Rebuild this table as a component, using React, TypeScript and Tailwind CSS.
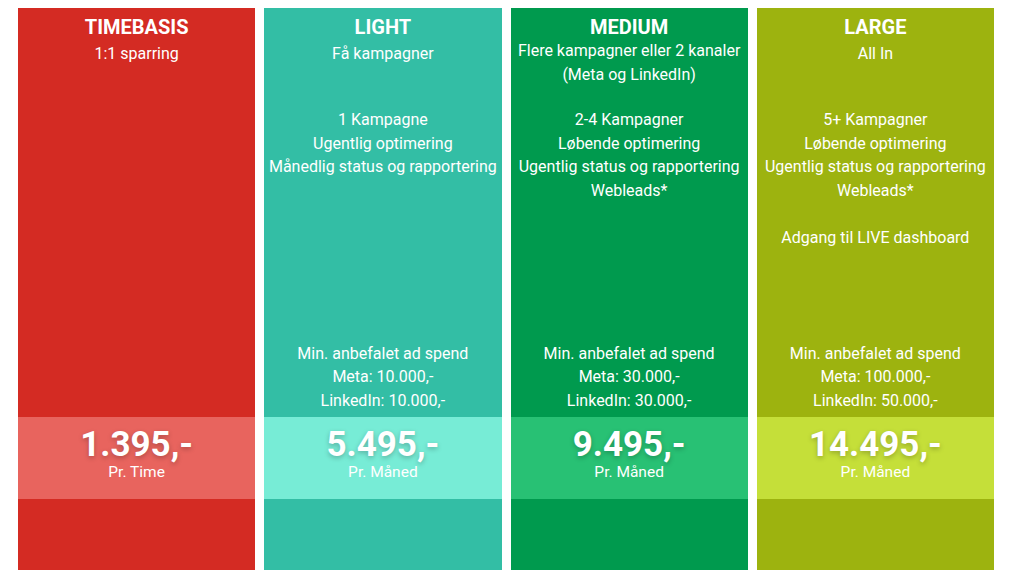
import React from "react";

interface Plan {
  title: string;
  subtitle: string[];
  features: string[];
  spend: string[];
  price: string;
  unit: string;
  bg: string;
  band: string;
  tight?: boolean;
}

const PLANS: Plan[] = [
  {
    title: "TIMEBASIS",
    subtitle: ["1:1 sparring"],
    features: [],
    spend: [],
    price: "1.395,-",
    unit: "Pr. Time",
    bg: "bg-[#d42b23]",
    band: "bg-[#e8645e]",
  },
  {
    title: "LIGHT",
    subtitle: ["Få kampagner"],
    features: ["1 Kampagne", "Ugentlig optimering", "Månedlig status og rapportering"],
    spend: ["Min. anbefalet ad spend", "Meta: 10.000,-", "LinkedIn: 10.000,-"],
    price: "5.495,-",
    unit: "Pr. Måned",
    bg: "bg-[#33bea5]",
    band: "bg-[#77ecd6]",
  },
  {
    title: "MEDIUM",
    subtitle: ["Flere kampagner eller 2 kanaler", "(Meta og LinkedIn)"],
    features: ["2-4 Kampagner", "Løbende optimering", "Ugentlig status og rapportering", "Webleads*"],
    spend: ["Min. anbefalet ad spend", "Meta: 30.000,-", "LinkedIn: 30.000,-"],
    price: "9.495,-",
    unit: "Pr. Måned",
    bg: "bg-[#009a4e]",
    band: "bg-[#28c174]",
    tight: true,
  },
  {
    title: "LARGE",
    subtitle: ["All In"],
    features: [
      "5+ Kampagner",
      "Løbende optimering",
      "Ugentlig status og rapportering",
      "Webleads*",
      "",
      "Adgang til LIVE dashboard",
    ],
    spend: ["Min. anbefalet ad spend", "Meta: 100.000,-", "LinkedIn: 50.000,-"],
    price: "14.495,-",
    unit: "Pr. Måned",
    bg: "bg-[#9db30f]",
    band: "bg-[#c5df39]",
  },
];

function PlanColumn({ plan }: { plan: Plan }) {
  return (
    <div className={`flex flex-col text-center text-white ${plan.bg}`}>
      <div className="h-[100px] pt-[5px]">
        <div className="text-[20px] font-bold leading-[28px]">{plan.title}</div>
        <div className={`text-[16px] leading-[23.5px] ${plan.tight ? "-mt-[2px]" : "mt-[1px]"}`}>
          {plan.subtitle.map((s) => (
            <div key={s}>{s}</div>
          ))}
        </div>
      </div>
      <div className="text-[16px] leading-[23.5px]">
        {plan.features.map((f, i) => (
          <div key={i} className="h-[23.5px]">{f}</div>
        ))}
      </div>
      <div className="flex-1" />
      <div className="mb-[5px] text-[16px] leading-[23.5px]">
        {plan.spend.map((s) => (
          <div key={s}>{s}</div>
        ))}
      </div>
      <div className={`h-[82px] pt-[10px] ${plan.band}`}>
        <div className="text-[35px] font-bold leading-[36px] [text-shadow:0_2px_5px_rgba(0,0,0,0.25)]">
          {plan.price}
        </div>
        <div className="text-[15.5px] leading-[18px]">{plan.unit}</div>
      </div>
      <div className="h-[71px]" />
    </div>
  );
}

export default function App() {
  return (
    <div className="h-[576px] w-[1024px] bg-white pt-[8px] pb-[6px] pl-[18px] pr-[30px] font-['Roboto',sans-serif]">
      <div className="grid h-full grid-cols-4 gap-[9px]">
        {PLANS.map((p) => (
          <PlanColumn key={p.title} plan={p} />
        ))}
      </div>
    </div>
  );
}
